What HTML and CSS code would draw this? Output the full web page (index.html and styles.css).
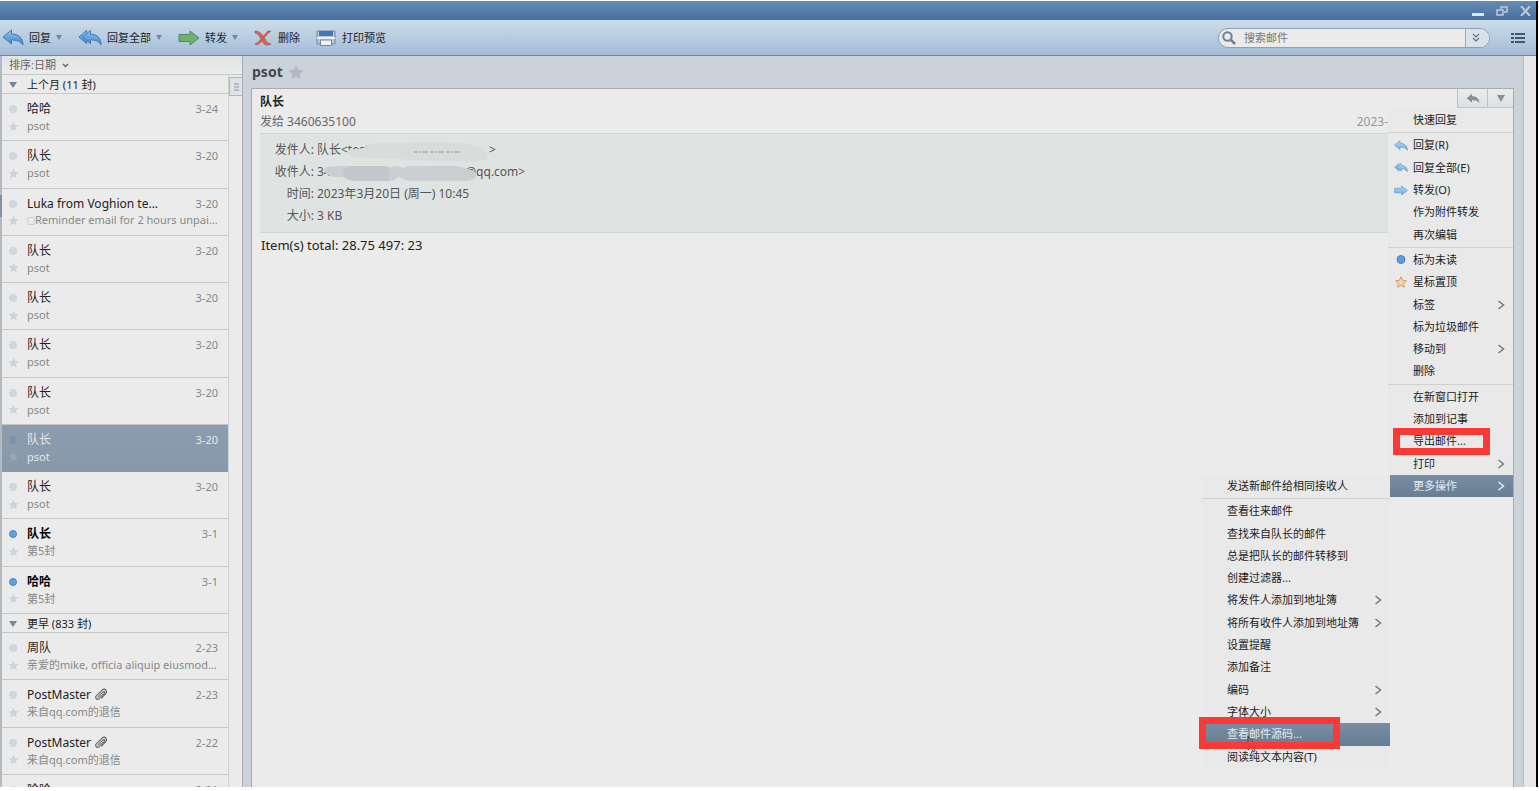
FILE: index.html
```html
<!DOCTYPE html>
<html lang="zh-CN">
<head>
  <meta charset="UTF-8">
  <meta name="viewport" content="width=device-width, initial-scale=1.0">
  <title>psot</title>
  <link rel="stylesheet" href="styles.css">
</head>
<body>

<svg class="sprite" aria-hidden="true">
  <defs>
    <linearGradient id="blue" x1="0" y1="0" x2="0" y2="1">
      <stop offset="0" stop-color="#8fc4ee"/>
      <stop offset="1" stop-color="#3f86cf"/>
    </linearGradient>
    <linearGradient id="light-blue" x1="0" y1="0" x2="0" y2="1">
      <stop offset="0" stop-color="#b4d8f4"/>
      <stop offset="1" stop-color="#6aace4"/>
    </linearGradient>
    <symbol id="reply" viewBox="0 0 22 17">
      <path d="M1 8 9.500 1v4c7 0 11.500 4 11.500 11-3-4-6-5-11.500-5v4z"/>
    </symbol>
    <symbol id="reply-all" viewBox="0 0 25 17">
      <path d="M1 8 9 1v4l-4 3 4 3v4z"/>
      <path d="M5 8 13 1v4c7 0 11 4 11 11-3-4-6-5-11-5v4z"/>
    </symbol>
    <symbol id="forward" viewBox="0 0 22 16">
      <path d="M1 4.500h11V1l9 7-9 7v-3.500H1z"/>
    </symbol>
    <symbol id="star" viewBox="0 0 16 16">
      <path d="m8 1 2.200 4.800 5.100.6-3.800 3.500 1 5.100L8 12.500 3.500 15l1-5.100L.7 6.400l5.100-.6z"/>
    </symbol>
    <symbol id="right" viewBox="0 0 8 10">
      <path d="m1.500 1 5 4-5 4" fill="none" stroke="#777" stroke-width="1.500"/>
    </symbol>
    <symbol id="clip" viewBox="0 0 14 14">
      <path d="m4 10 6-6c1-1 2.300.4 1.300 1.400L5.500 11.500c-2 2-5-.8-3-3l6-6c3-3 6.800.9 4 3.800L8 11.300" fill="none" stroke="#666" stroke-width="1.200"/>
    </symbol>
  </defs>
</svg>

<div class="window">
  <header class="titlebar">
    <button class="win-btn" aria-label="最小化"><svg width="12" height="10"><path d="M0 8.500h12" stroke="#dce6ef" stroke-width="3"/></svg></button>
    <button class="win-btn" aria-label="还原"><svg width="12" height="10"><path d="M5 3V1h6v5H8M1 4h6v5H1z" fill="none" stroke="#b9cbdc" stroke-width="1.500"/></svg></button>
    <button class="win-btn" aria-label="关闭"><svg width="12" height="10"><path d="m1 0 9 10M10 0 1 10" fill="none" stroke="#b9cbdc" stroke-width="2"/></svg></button>
  </header>

  <nav class="toolbar">
    <button class="tool"><svg class="blue" width="22" height="17"><use href="#reply"/></svg>回复<i class="caret"></i></button>
    <button class="tool"><svg class="blue" width="24" height="17"><use href="#reply-all"/></svg>回复全部<i class="caret"></i></button>
    <button class="tool"><svg class="green" width="22" height="16"><use href="#forward"/></svg>转发<i class="caret"></i></button>
    <button class="tool plain">
      <svg width="18" height="16" viewBox="0 0 18 16"><path d="M1 1c5 0 8 4 10 8 1 3 3 4 6 5-4 2-7 1-9-3C6 7 5 4 1 3z" fill="#e0604f" stroke="#9b5a58" stroke-width=".7"/><path d="M17 1h-3C11 4 9 7 6 10c-1 2-3 3-5 4l1 1c4-1 6-4 8-7 2-2 4-5 7-7z" fill="#e0604f" stroke="#9b5a58" stroke-width=".7"/></svg>删除</button>
    <button class="tool plain">
      <svg width="20" height="16" viewBox="0 0 20 16"><path d="M1 1h18v13H1z" fill="#b8c8d8" stroke="#74859a"/><path d="M3 1h14v5H3z" fill="#4279b4"/><path d="M1 7h18v2H1z" fill="#edf1f4"/><path d="M4.500 10h11v5.500h-11z" fill="#eef2f5" stroke="#74859a"/></svg>打印预览</button>
    <div class="search">
      <svg width="14" height="14" viewBox="0 0 14 14"><circle cx="5.500" cy="5.500" r="4.200" fill="none" stroke="#70808f" stroke-width="2"/><path d="m9 9 4 4" stroke="#70808f" stroke-width="2.500"/></svg>
      <input type="text" placeholder="搜索邮件" aria-label="搜索邮件">
      <button aria-label="搜索选项"><svg width="8" height="9" viewBox="0 0 8 9"><path d="m1 1 3 3 3-3M1 5l3 3 3-3" fill="none" stroke="#68737f" stroke-width="1.200"/></svg></button>
    </div>
    <button class="list-btn" aria-label="菜单"><svg width="14" height="12"><path d="M0 2h3M4 2h10M0 6h3M4 6h10M0 10h3M4 10h10" stroke="#43566f" stroke-width="2"/></svg></button>
  </nav>

  <div class="main">
    <aside class="sidebar">
      <button class="sort">排序:日期 <svg width="7" height="5"><path d="m1 1 2.500 2.500L6 1" fill="none" stroke="#666" stroke-width="1.500"/></svg></button>
      <div class="columns">
        <div class="mails">
          <h2 class="group"><i class="caret"></i>上个月 (11 封)</h2>
          <ul class="list last-month">
            <li class="mail"><i class="dot"></i><b>哈哈</b><time>3-24</time><svg class="star"><use href="#star"/></svg><p>psot</p></li>
            <li class="mail"><i class="dot"></i><b>队长</b><time>3-20</time><svg class="star"><use href="#star"/></svg><p>psot</p></li>
            <li class="mail"><i class="dot"></i><b>Luka from Voghion te...</b><time>3-20</time><svg class="star"><use href="#star"/></svg><p><span class="tofu">□</span>Reminder email for 2 hours unpai...</p></li>
            <li class="mail"><i class="dot"></i><b>队长</b><time>3-20</time><svg class="star"><use href="#star"/></svg><p>psot</p></li>
            <li class="mail"><i class="dot"></i><b>队长</b><time>3-20</time><svg class="star"><use href="#star"/></svg><p>psot</p></li>
            <li class="mail"><i class="dot"></i><b>队长</b><time>3-20</time><svg class="star"><use href="#star"/></svg><p>psot</p></li>
            <li class="mail"><i class="dot"></i><b>队长</b><time>3-20</time><svg class="star"><use href="#star"/></svg><p>psot</p></li>
            <li class="mail selected"><i class="dot"></i><b>队长</b><time>3-20</time><svg class="star"><use href="#star"/></svg><p>psot</p></li>
            <li class="mail"><i class="dot"></i><b>队长</b><time>3-20</time><svg class="star"><use href="#star"/></svg><p>psot</p></li>
            <li class="mail unread"><i class="dot"></i><b>队长</b><time>3-1</time><svg class="star"><use href="#star"/></svg><p>第5封</p></li>
            <li class="mail unread"><i class="dot"></i><b>哈哈</b><time>3-1</time><svg class="star"><use href="#star"/></svg><p>第5封</p></li>
          </ul>
          <h2 class="group"><i class="caret"></i>更早 (833 封)</h2>
          <ul class="list older">
            <li class="mail"><i class="dot"></i><b>周队</b><time>2-23</time><svg class="star"><use href="#star"/></svg><p>亲爱的mike, officia aliquip eiusmod...</p></li>
            <li class="mail"><i class="dot"></i><b>PostMaster <svg width="13" height="13"><use href="#clip"/></svg></b><time>2-23</time><svg class="star"><use href="#star"/></svg><p>来自qq.com的退信</p></li>
            <li class="mail"><i class="dot"></i><b>PostMaster <svg width="13" height="13"><use href="#clip"/></svg></b><time>2-22</time><svg class="star"><use href="#star"/></svg><p>来自qq.com的退信</p></li>
            <li class="mail"><i class="dot"></i><b>哈哈</b><time>2-21</time></li>
          </ul>
        </div>
        <div class="track"><div class="thumb"><svg width="5" height="8"><path d="M0 1h5M0 4h5M0 7h5" stroke="#8b939b"/></svg></div></div>
      </div>
    </aside>

    <section class="reader">
      <h1>psot <svg width="16" height="16"><use href="#star"/></svg></h1>
      <article class="message">
        <div class="actions">
          <button aria-label="回复"><svg width="14" height="11" fill="#858f99"><use href="#reply"/></svg></button>
          <button aria-label="更多"><i class="caret"></i></button>
          <ul class="menu">
            <li><button>快速回复</button></li>
            <li class="line"></li>
            <li><button><svg class="light-blue" width="14" height="11"><use href="#reply"/></svg>回复(R)</button></li>
            <li><button><svg class="light-blue" width="14" height="11"><use href="#reply-all"/></svg>回复全部(E)</button></li>
            <li><button><svg class="light-blue" width="14" height="11"><use href="#forward"/></svg>转发(O)</button></li>
            <li><button>作为附件转发</button></li>
            <li><button>再次编辑</button></li>
            <li class="line"></li>
            <li><button><svg width="14" height="11"><circle cx="7" cy="5.500" r="4" fill="#5b9fdc" stroke="#4487c4"/></svg>标为未读</button></li>
            <li><button><svg class="gold" width="14" height="12"><use href="#star"/></svg>星标置顶</button></li>
            <li><button>标签<svg class="more"><use href="#right"/></svg></button></li>
            <li><button>标为垃圾邮件</button></li>
            <li><button>移动到<svg class="more"><use href="#right"/></svg></button></li>
            <li><button>删除</button></li>
            <li class="line"></li>
            <li><button>在新窗口打开</button></li>
            <li><button>添加到记事</button></li>
            <li><button>导出邮件...</button><span class="mark mark-export"></span></li>
            <li><button>打印<svg class="more"><use href="#right"/></svg></button></li>
            <li class="active"><button>更多操作<svg class="more" viewBox="0 0 8 10"><path d="m1.500 1 5 4-5 4" fill="none" stroke="#e4eaf0" stroke-width="1.500"/></svg></button>
              <ul class="menu submenu">
                <li><button>发送新邮件给相同接收人</button></li>
                <li class="line"></li>
                <li><button>查看往来邮件</button></li>
                <li><button>查找来自队长的邮件</button></li>
                <li><button>总是把队长的邮件转移到</button></li>
                <li><button>创建过滤器...</button></li>
                <li><button>将发件人添加到地址簿<svg class="more"><use href="#right"/></svg></button></li>
                <li><button>将所有收件人添加到地址簿<svg class="more"><use href="#right"/></svg></button></li>
                <li><button>设置提醒</button></li>
                <li><button>添加备注</button></li>
                <li><button>编码<svg class="more"><use href="#right"/></svg></button></li>
                <li><button>字体大小<svg class="more"><use href="#right"/></svg></button></li>
                <li class="active"><button>查看邮件源码...</button>
                  <svg class="pointer" width="12" height="20" viewBox="0 0 12 20"><path d="m1 1 5 6M1 1v14l3-3 2 5 2-1-2-5h5" fill="none" stroke="#3c444b"/></svg>
                  <span class="mark mark-source"></span></li>
                <li><button>阅读纯文本内容(T)</button></li>
              </ul>
            </li>
          </ul>
        </div>

        <div class="heading">
          <strong>队长</strong>
          <div class="sent"><span>发给 3460635100</span><time>2023-</time></div>
        </div>
        <dl class="details">
          <div><dt>发件人:</dt><dd>队长&lt;test<span class="smudge smudge-from">
            <svg width="142" height="20" viewBox="0 0 142 20"><path d="M0 8C5 7 12 7 18 6c1-3 6-5 16-5C56 1 84-1 110 1c18 1 28 6 31 11 0 5-3 7-8 7-30 2-60 0-80-2-17-1-30 0-44-2-5-1-8-3-9-7z" fill="#d9dcdb"/><path d="M67 10h48" stroke="#969c9b" stroke-dasharray="4 1 2 1 6 2"/></svg></span>&gt;</dd></div>
          <div><dt>收件人:</dt><dd>34655<span class="smudge smudge-to">
            <svg width="154" height="17" viewBox="0 0 154 17"><path d="M1 5C3 1 12 1 26 1h36c4 0 5 3 7 1 3-2 8-1 11 1 5-3 11-3 18-2h34c10 1 20 4 22 9-1 5-8 6-15 6H86c-5-1-9-4-11-4-3 3-5 4-10 4H30c-5-1-7-3-9-4-11 1-19-1-20-7z" fill="#cccfd1"/><path d="M26 1h36c4 0 5 5 4 15H30c-5-1-7-3-9-4-2-4 0-9 5-11z" fill="#c3c6ca"/></svg></span>@qq.com&gt;</dd></div>
          <div><dt>时间:</dt><dd>2023年3月20日 (周一) 10:45</dd></div>
          <div><dt>大小:</dt><dd>3 KB</dd></div>
        </dl>
        <p class="text">Item(s) total: 28.75 497: 23</p>
      </article>
    </section>
    <div class="edge"></div>
  </div>
</div>

</body>
</html>
```
FILE: styles.css
```css
* {
  box-sizing: border-box;
}

body {
  margin: 0;
  padding: 1px 1px 4px 0;
  height: 100vh;
  background: #fff;
  color: #222;
  font-family: "Noto Sans", "Noto Sans CJK SC", sans-serif;
  font-size: 11px;
  line-height: 16px;
}

button {
  padding: 0;
  border: 0;
  background: none;
  color: inherit;
  font: inherit;
}

h1, h2, p, ul, dl, dd {
  margin: 0;
  padding: 0;
}

ul {
  list-style: none;
}

svg {
  flex: none;
}

.sprite {
  position: absolute;
  width: 0;
  height: 0;
}

.window {
  display: flex;
  flex-direction: column;
  height: 100%;
  overflow: hidden;
  border-right: 2px solid #000;
}

/* Iconos y flechas */
.blue {
  fill: url(#blue);
  stroke: #4378b0;
}

.light-blue {
  fill: url(#light-blue);
  stroke: #5a95cb;
}

.green {
  fill: #6db26a;
  stroke: #58836b;
}

.gold {
  fill: #f3d5ab;
  stroke: #c58b4c;
}

.caret {
  flex: none;
  border: 4px solid transparent;
  border-top: 5px solid #74869a;
  border-bottom: 0;
}

.titlebar {
  flex: none;
  display: flex;
  justify-content: flex-end;
  align-items: center;
  gap: 12px;
  height: 19px;
  padding-right: 4px;
  background: linear-gradient(#668db5, #476e9c);
}

.win-btn {
  display: flex;
}

.toolbar {
  flex: none;
  display: flex;
  align-items: center;
  gap: 16px;
  height: 36px;
  padding: 0 11px 0 2px;
  background: linear-gradient(#cbdde9, #a4bcd7);
  border-bottom: 1px solid #72869d;
}

.tool {
  display: flex;
  align-items: center;
  gap: 5px;
}

.plain {
  gap: 6px;
}

.tool .caret {
  border-width: 5px 3px 0;
}

.search {
  display: flex;
  align-items: center;
  width: 272px;
  height: 20px;
  margin-left: auto;
  padding-left: 3px;
  border: 1px solid #8fa0b3;
  border-radius: 10px;
  background: #ebebeb;
}

.search input {
  flex: 1;
  min-width: 0;
  padding: 0 8px;
  border: 0;
  background: none;
  font: inherit;
}

.search input::placeholder {
  color: #777;
}

.search button {
  display: flex;
  align-items: center;
  justify-content: center;
  width: 24px;
  height: 18px;
  padding-right: 3px;
  border-left: 1px solid #9eaab8;
  border-radius: 0 9px 9px 0;
  background: #d9e2ea;
}

.list-btn {
  display: flex;
  margin-left: 5px;
}

.main {
  flex: 1;
  display: flex;
  min-height: 0;
  background: #cbd2d9;
}

/* Lista de correos */
.sidebar {
  flex: none;
  display: flex;
  flex-direction: column;
  position: relative;
  width: 243px;
  border-left: 2px solid #b4bac2;
  border-right: 1px solid #a6adb6;
  background: #ebebeb;
}

/* Marca de la carpeta abierta */
.sidebar::before {
  content: "";
  position: absolute;
  top: 139px;
  left: -2px;
  width: 2px;
  height: 22px;
  background: #8091a2;
}

.sort {
  flex: none;
  display: flex;
  align-items: center;
  gap: 6px;
  height: 19px;
  padding-left: 7px;
  border-bottom: 1px solid #c5c8cb;
  background: linear-gradient(#e0e4e5, #ebebeb);
  color: #666;
}

.columns {
  flex: 1;
  display: flex;
  min-height: 0;
}

.mails {
  flex: 1;
  min-width: 0;
  overflow: hidden;
}

.group {
  display: flex;
  align-items: center;
  gap: 10px;
  height: 19px;
  padding: 1px 0 0 7px;
  border-bottom: 1px solid #c5c8cb;
  font-size: 11px;
  font-weight: normal;
}

.group .caret {
  border-top-width: 6px;
}

.list {
  display: grid;
  grid-auto-rows: 1fr;
}

.last-month {
  min-height: 520px;
}

.older {
  min-height: 189px;
}

.mail {
  display: grid;
  grid-template-columns: 12px 1fr auto;
  grid-template-rows: 18px 16px;
  column-gap: 8px;
  align-items: center;
  padding: 6px 10px 0 5px;
  border-bottom: 1px solid #c5c8cb;
}

.mail b {
  font-size: 12px;
  font-weight: normal;
}

.mail b svg {
  vertical-align: -2px;
}

.mail time {
  color: #888;
}

.mail p {
  grid-column: 2 / 4;
  color: #888;
  white-space: nowrap;
}

.tofu {
  font-size: 8px;
}

.dot {
  justify-self: center;
  width: 8px;
  height: 8px;
  border-radius: 50%;
  background: #d0d6dc;
}

.star {
  justify-self: center;
  width: 11px;
  height: 11px;
  fill: #cdd3d9;
}

.mail.unread b {
  color: #000;
  font-weight: bold;
}

.unread .dot {
  border: 1px solid #4386c5;
  background: #5fa4e0;
}

.selected {
  border-color: #869aac;
  background: linear-gradient(#8c9daf, #8799a9);
}

.selected b, .selected time, .selected p {
  color: #e4e8ec;
}

.selected .dot {
  background: #8092a3;
}

.selected .star {
  fill: #98a7b5;
}

.track {
  width: 14px;
  padding-top: 2px;
  border-left: 1px solid #cfd1d3;
}

.thumb {
  display: flex;
  align-items: center;
  justify-content: center;
  height: 19px;
  border: 1px solid #b1b8be;
  border-right: 0;
  background: #dfe3e6;
}

/* Lectura del mensaje */
.reader {
  flex: 1;
  display: flex;
  flex-direction: column;
  min-width: 0;
  padding: 0 9px 0 8px;
}

.reader h1 {
  display: flex;
  align-items: center;
  gap: 5px;
  height: 32px;
  padding-left: 1px;
  color: #44484d;
  font-size: 14px;
}

.reader h1 svg {
  fill: #b2b8bf;
}

.message {
  flex: 1;
  position: relative;
  border: 1px solid #a5acb4;
  border-bottom: 0;
  background: #ebebeb;
}

.heading {
  padding: 5px 125px 2px 8px;
  font-size: 12px;
}

.heading strong {
  display: block;
  height: 18px;
}

.sent {
  display: flex;
  justify-content: space-between;
  height: 19px;
  line-height: 19px;
  color: #666;
}

.sent time {
  color: #999;
}

.details {
  margin: 0 125px 0 8px;
  padding: 5px 0;
  border: solid #d1d5d5;
  border-width: 1px 0;
  background: #dfe4e2;
  color: #555;
  font-size: 12px;
}

.details div {
  display: flex;
  gap: 3px;
  height: 22px;
  line-height: 22px;
}

.details dt {
  width: 54px;
  text-align: right;
}

.details dd {
  display: flex;
  align-items: center;
}

.smudge {
  display: flex;
  padding-top: 3px;
}

.smudge-from {
  margin-left: -22px;
}

.smudge-to {
  z-index: 1;
  margin: 0 -12px 0 -28px;
}

.text {
  padding: 4px 9px;
  font-size: 13px;
}

.actions {
  position: absolute;
  top: 0;
  right: 0;
  display: flex;
  width: 56px;
  height: 19px;
  border: solid #bcc2c7;
  border-width: 0 0 1px 1px;
  background: linear-gradient(#ebebeb, #dde0e3);
}

.actions > button {
  flex: 1;
  display: flex;
  align-items: center;
  justify-content: center;
}

.actions > button + button {
  flex: none;
  width: 26px;
  border-left: 1px solid #bcc2c7;
}

.actions > button .caret {
  border-top: 7px solid #858f99;
}

/* Menús desplegables */
.menu {
  position: absolute;
  top: 20px;
  right: 0;
  display: flex;
  flex-direction: column;
  width: 125px;
  height: 388px;
  background: #e9e9e9;
  color: #1c1c1c;
}

.menu li {
  flex: 1;
  position: relative;
  display: flex;
}

.menu .line {
  flex: none;
  height: 3px;
  border: solid #e9e9e9;
  border-width: 1px 0;
  background: #d0d0d0;
}

.menu button {
  flex: 1;
  display: flex;
  align-items: center;
  position: relative;
  padding-left: 25px;
  white-space: nowrap;
}

.menu button svg:first-child:not(.more) {
  margin: 0 5px 0 -19px;
}

.menu .more {
  width: 8px;
  height: 10px;
  margin: 0 8px 0 auto;
}

.menu .active > button {
  margin-left: 2px;
  padding-left: 23px;
  background: linear-gradient(#798ea5, #667d92);
  color: #e4eaf0;
}

.submenu {
  top: 0;
  right: 123px;
  width: 188px;
  height: 293px;
}

.submenu .active > button {
  margin-left: 0;
  padding-left: 25px;
}

.mark {
  position: absolute;
  z-index: 2;
  border: 7px solid #fb3a38;
}

.mark-export {
  top: -2px;
  left: 5px;
  width: 97px;
  height: 27px;
}

.mark-source {
  top: -6px;
  left: -3px;
  width: 141px;
  height: 32px;
}

.pointer {
  position: absolute;
  top: 12px;
  left: 45px;
  z-index: 1;
}

.edge {
  flex: none;
  width: 13px;
  border-left: 1px solid #b8bdc4;
  background: #e8e8e8;
}
```
